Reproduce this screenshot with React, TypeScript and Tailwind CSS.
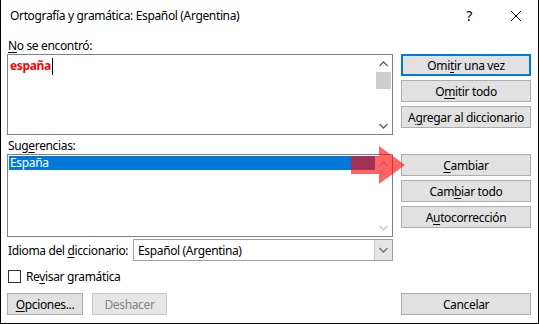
import React from "react";

const U = ({ children }: { children: React.ReactNode }) => (
  <span className="underline decoration-1 underline-offset-[2px]">{children}</span>
);

function Btn({
  children,
  focused,
  disabled,
  className = "",
}: {
  children: React.ReactNode;
  focused?: boolean;
  disabled?: boolean;
  className?: string;
}) {
  const border = focused
    ? "border-2 border-[#0078d7]"
    : disabled
    ? "border border-[#c6c6c6]"
    : "border border-[#adadad]";
  const color = disabled ? "text-[#838383] bg-[#e6e6e6]" : "text-black bg-[#e1e1e1]";
  return (
    <div className={`h-[22px] flex items-center justify-center whitespace-nowrap leading-[15px] ${border} ${color} ${className}`}>
      {children}
    </div>
  );
}

const Chevron = ({ up, color = "#606060" }: { up?: boolean; color?: string }) => (
  <svg width="9" height="6" viewBox="0 0 9 6">
    <polyline
      points={up ? "0.5,5 4.5,1 8.5,5" : "0.5,1 4.5,5 8.5,1"}
      fill="none"
      stroke={color}
      strokeWidth="1.3"
    />
  </svg>
);

export default function App() {
  return (
    <div className="w-[539px] h-[324px] bg-white border-x border-b border-black relative overflow-hidden font-['Noto_Sans',sans-serif] text-[12px] tracking-[-0.35px] text-black">
      {/* Title bar */}
      <div className="h-[36px] flex items-start pt-[7px] pl-[9px] pr-[16px]">
        <span className="leading-[17px] whitespace-nowrap">Ortografía y gramática: Español (Argentina)</span>
        <span className="ml-auto mr-[38px] text-[14px] leading-[17px]">?</span>
        <svg width="12" height="12" viewBox="0 0 12 12" className="mt-[3px]">
          <line x1="1" y1="1" x2="11" y2="11" stroke="#000" strokeWidth="1" />
          <line x1="11" y1="1" x2="1" y2="11" stroke="#000" strokeWidth="1" />
        </svg>
      </div>

      <div className="flex pl-[6px] h-[279px]">
        {/* Left column */}
        <div className="w-[386px] flex flex-col">
          <div className="h-[18px] pt-[2px] leading-[15px] pl-[1px] whitespace-nowrap">
            <U>N</U>o se encontró:
          </div>
          <div className="h-[81px] border border-[#828282] flex">
            <div className="flex-1 pl-[2px] pt-[3px] flex items-start">
              <span className="font-bold text-[#ff0000] leading-[16px]">españa</span>
              <span className="w-px h-[17px] bg-black ml-[1px]" />
            </div>
            <div className="w-[17px] flex flex-col items-center">
              <div className="h-[17px] flex items-center justify-center">
                <Chevron up />
              </div>
              <div className="w-[15px] h-[17px] bg-[#cdcdcd]" />
              <div className="flex-1" />
              <div className="h-[17px] flex items-center justify-center">
                <Chevron />
              </div>
            </div>
          </div>
          <div className="h-[19px] pt-[3px] leading-[15px] pl-[1px] whitespace-nowrap">
            Sug<U>e</U>rencias:
          </div>
          <div className="h-[83px] border border-[#828282] flex">
            <div className="flex-1 pl-[1px] pt-[1px]">
              <div className="h-[14px] bg-[#0078d7] text-white leading-[14px] pl-[1px]">España</div>
            </div>
            <div className="w-[17px] flex flex-col items-center">
              <div className="h-[17px] flex items-center justify-center">
                <Chevron up color="#c8c8c8" />
              </div>
              <div className="flex-1" />
              <div className="h-[17px] flex items-center justify-center">
                <Chevron color="#c8c8c8" />
              </div>
            </div>
          </div>
          <div className="mt-[2px] h-[22px] flex items-center">
            <span className="w-[126px] shrink-0 pl-[1px] leading-[15px] whitespace-nowrap">
              Idioma del <U>d</U>iccionario:
            </span>
            <div className="flex-1 h-[22px] border border-[#a0a0a0] flex">
              <div className="flex-1 pl-[4px] flex items-center leading-[15px] whitespace-nowrap">Español (Argentina)</div>
              <div className="w-[18px] bg-[#e5e5e5] border-l border-[#c8c8c8] flex items-center justify-center">
                <Chevron color="#707070" />
              </div>
            </div>
          </div>
          <div className="mt-[8px] h-[14px] flex items-center pl-[1px]">
            <div className="w-[13px] h-[13px] border border-[#333333] bg-white" />
            <span className="ml-[5px] leading-[15px] whitespace-nowrap">
              Re<U>v</U>isar gramática
            </span>
          </div>
          <div className="mt-[10px] flex gap-[9px]">
            <Btn className="w-[76px]">
              <span>
                <U>O</U>pciones...
              </span>
            </Btn>
            <Btn disabled className="w-[75px]">
              Deshacer
            </Btn>
          </div>
        </div>

        {/* Right column */}
        <div className="ml-[8px] w-[130px] flex flex-col pt-[18px]">
          <Btn focused>
            <span>
              Omi<U>t</U>ir una vez
            </span>
          </Btn>
          <Btn className="mt-[4px]">
            <span>
              O<U>m</U>itir todo
            </span>
          </Btn>
          <Btn className="mt-[4px]">
            <span>
              A<U>g</U>regar al diccionario
            </span>
          </Btn>
          <Btn className="mt-[26px]">
            <span>
              <U>C</U>ambiar
            </span>
          </Btn>
          <Btn className="mt-[4px]">
            <span>
              Cam<U>b</U>iar todo
            </span>
          </Btn>
          <Btn className="mt-[4px]">
            <span>
              A<U>u</U>tocorrección
            </span>
          </Btn>
          <div className="flex-1" />
          <Btn>Cancelar</Btn>
        </div>
      </div>

      {/* Red annotation arrow overlay */}
      <svg className="absolute left-[350px] top-[145px]" width="56" height="41" viewBox="0 0 56 41">
        <polygon
          points="0,11 28,11 28,1 54,20 28,39 28,29 0,29"
          fill="rgba(255,10,10,0.63)"
        />
      </svg>
    </div>
  );
}
